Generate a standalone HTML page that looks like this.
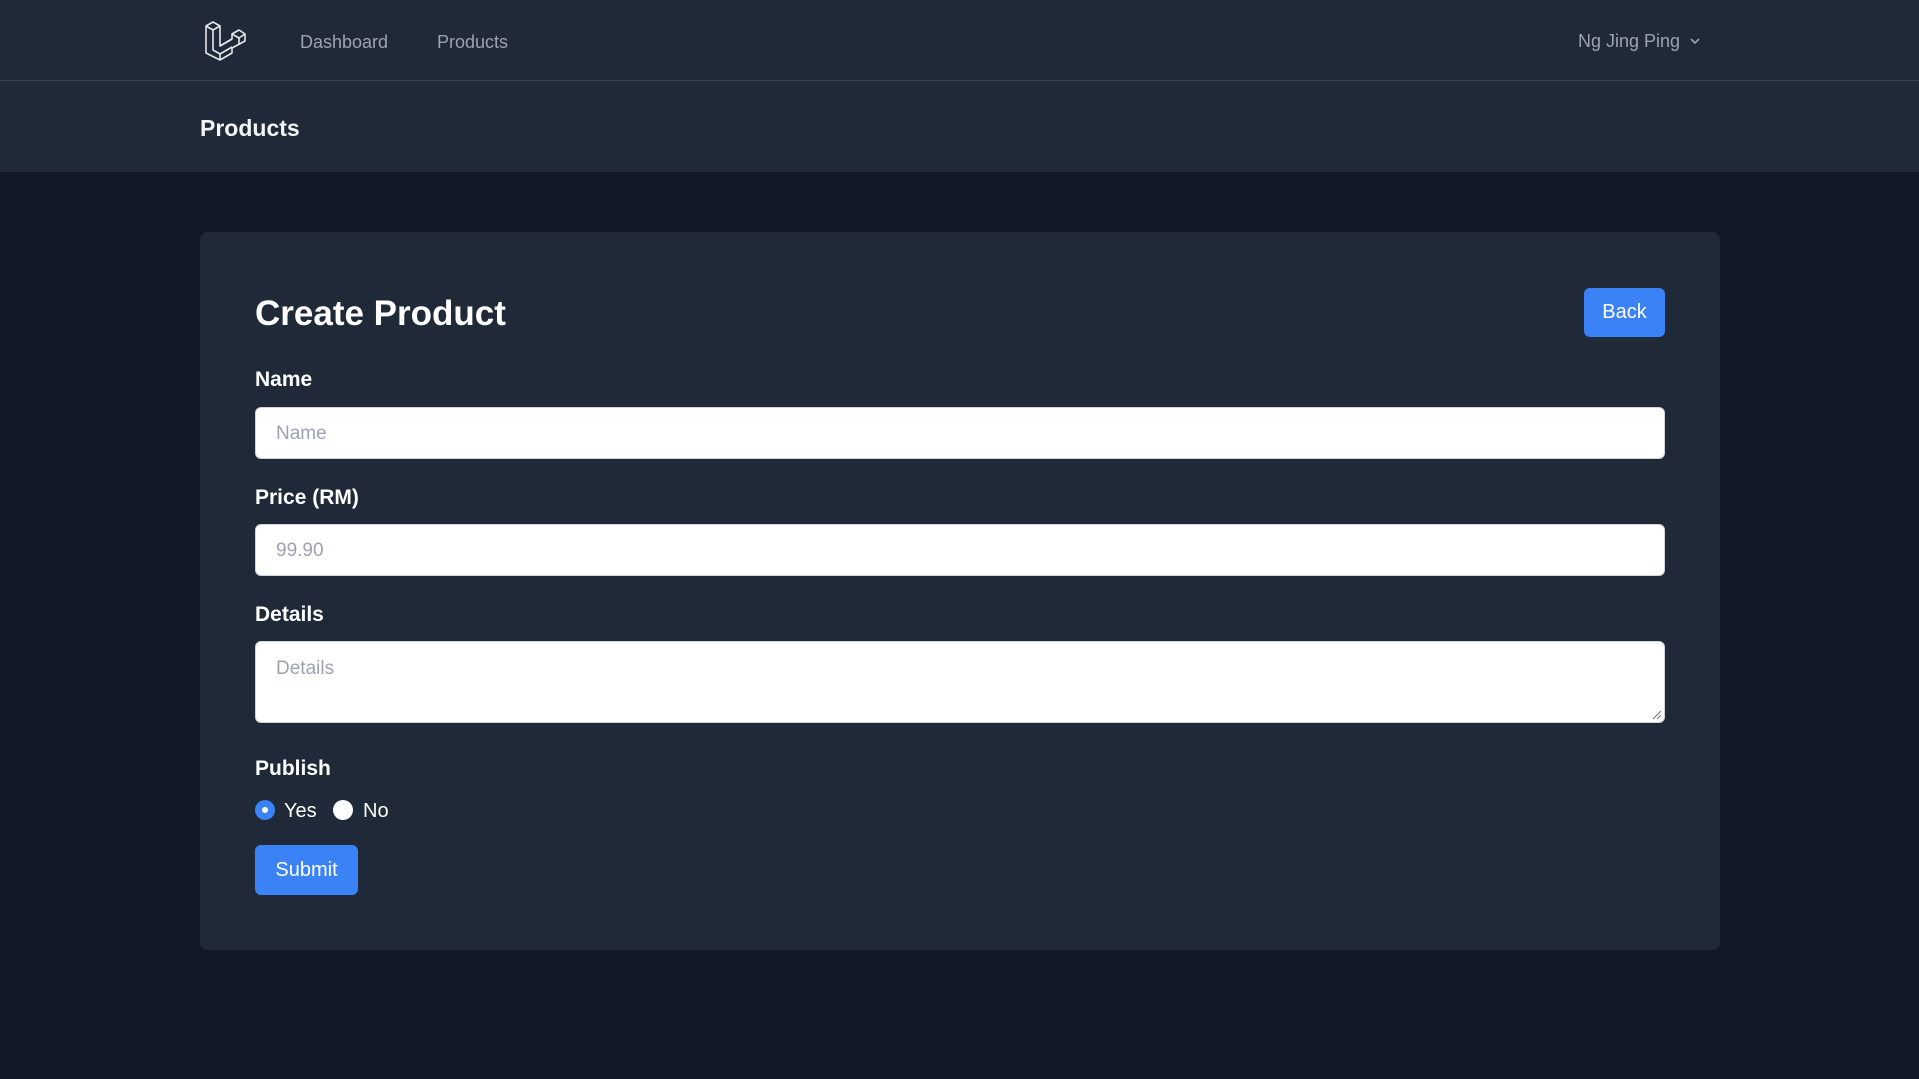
<!DOCTYPE html>
<html><head><meta charset="utf-8"><style>
*{box-sizing:border-box;margin:0;padding:0}
body{width:1919px;height:1079px;background:#111827;font-family:"Liberation Sans",sans-serif;position:relative;overflow:hidden;color:#fff}
.nav{position:absolute;left:0;top:0;width:100%;height:81px;background:#1f2937;border-bottom:1px solid #374151}
.hdr{position:absolute;left:0;top:81px;width:100%;height:91px;background:#1f2937}
.a{position:absolute;white-space:nowrap}
.navl{font-size:18px;color:#9ca3af;top:32px}
.card{position:absolute;left:200px;top:232px;width:1520px;height:718px;background:#1f2937;border-radius:8px}
.lbl{font-size:21px;font-weight:bold;color:#fff}
.inp{position:absolute;left:255px;width:1410px;background:#fff;border:1px solid #d1d5db;border-radius:6px;color:#9ca3af;font-size:19px;padding-left:20px}
.btn{position:absolute;background:#3b82f6;border-radius:6px;color:#fff;font-size:20px;display:flex;align-items:center;justify-content:center}
</style></head><body>
<div class="nav"></div>
<svg class="a" style="left:204px;top:20px" width="42" height="42" viewBox="0 0 42 42" fill="none" stroke="#e5e7eb" stroke-width="1.6" stroke-linejoin="round">
<path d="M2 6 L9 2 L16 6 L16 26 L28 19 L28 14 L35 10 L41 14 L41 21 L28 28 L28 33 L16 40 L2 33 Z"/>
<path d="M2 6 L9 10 L16 6 M9 10 L9 30 L16 34 L28 27 M16 34 L16 40 M28 14 L35 18 L41 14 M35 18 L35 24 M16 26 L28 19"/>
</svg>
<div class="a navl" style="left:300px">Dashboard</div>
<div class="a navl" style="left:437px">Products</div>
<div class="a navl" style="left:1578px;top:31px">Ng Jing Ping</div>
<svg class="a" style="left:1689px;top:35px" width="12" height="12" viewBox="0 0 12 12"><path d="M2 4 L6 8 L10 4" stroke="#9ca3af" stroke-width="1.6" fill="none"/></svg>
<div class="hdr"></div>
<div class="a" style="left:200px;top:115px;font-size:23px;font-weight:bold;color:#f3f4f6">Products</div>
<div class="card"></div>
<div class="a" style="left:255px;top:294px;font-size:35px;font-weight:bold">Create Product</div>
<div class="btn" style="left:1584px;top:288px;width:81px;height:49px">Back</div>
<div class="a lbl" style="left:255px;top:368px">Name</div>
<div class="inp" style="top:407px;height:52px;line-height:52px">Name</div>
<div class="a lbl" style="left:255px;top:486px">Price (RM)</div>
<div class="inp" style="top:524px;height:52px;line-height:52px">99.90</div>
<div class="a lbl" style="left:255px;top:603px">Details</div>
<div class="inp" style="top:641px;height:82px;line-height:54px">Details</div>
<svg class="a" style="left:1652px;top:710px" width="10" height="10"><path d="M9 1 L1 9 M9 5 L5 9" stroke="#6b7280" stroke-width="1"/></svg>
<div class="a lbl" style="left:255px;top:757px">Publish</div>
<div class="a" style="left:255px;top:800px;width:20px;height:20px;border-radius:50%;background:#3b82f6"></div>
<div class="a" style="left:262px;top:807px;width:6px;height:6px;border-radius:50%;background:#fff"></div>
<div class="a" style="left:284px;top:800px;font-size:20px">Yes</div>
<div class="a" style="left:333px;top:800px;width:20px;height:20px;border-radius:50%;background:#fff"></div>
<div class="a" style="left:363px;top:800px;font-size:20px">No</div>
<div class="btn" style="left:255px;top:845px;width:103px;height:50px">Submit</div>
</body></html>
